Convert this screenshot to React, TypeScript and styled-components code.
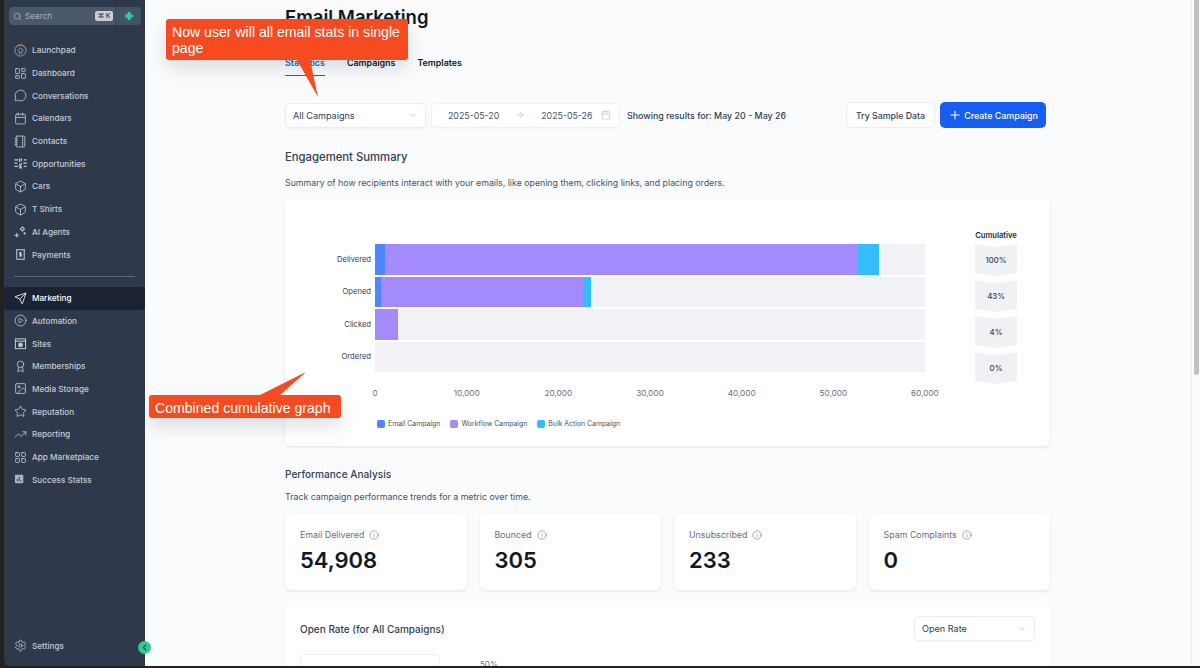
import React from "react";
import styled, { createGlobalStyle } from "styled-components";
import {
  Search, LayoutGrid, LayoutDashboard, MessageCircle, Calendar, Notebook, Box, Send, CirclePlay, Award, Image as ImageIcon,
  Star, TrendingUp, Settings, ChevronDown, ChevronLeft, ArrowRight, Plus, Info,
} from "lucide-react";

const Global = createGlobalStyle`
  html, body { margin: 0; padding: 0; height: 100%; overflow: hidden; background: #222; }
  * { box-sizing: border-box; }
  body { font-family: Inter, "Liberation Sans", sans-serif; }
`;

const Frame = styled.div`
  width: 1200px; height: 668px; background: #222; padding: 0 0 2px 4px; display: flex; position: relative; overflow: hidden;
`;
const Sidebar = styled.aside`
  width: 141px; flex: none; background: #2e3a4c; display: flex; flex-direction: column; border-bottom-left-radius: 6px; position: relative; padding-top: 7px;
`;
const SearchRow = styled.div`display: flex; margin: 0 4px 0 5px; height: 18px;`;
const SearchBox = styled.div`
  width: 106px; background: #4a586b; border-radius: 4px 0 0 4px; display: flex; align-items: center; padding: 0 2px 0 4px; color: #a9b2bf; font-size: 8.2px; gap: 3px;
`;
const SearchText = styled.span`flex: 1;`;
const Kbd = styled.span`
  background: #c9ced5; color: #3a4557; font-size: 6.5px; font-weight: 600; border-radius: 2px; height: 10px; line-height: 10px; width: 18px; flex: none; text-align: center; white-space: nowrap;
`;
const AiBtn = styled.div`flex: 1; background: #435265; border-radius: 0 4px 4px 0; display: flex; align-items: center; justify-content: center; border-left: 1px solid #39475a;`;
const NavList = styled.nav`display: flex; flex-direction: column; margin-top: 14px;`;
const NavRow = styled.div<{ $active?: boolean }>`
  height: 22.7px; display: flex; align-items: center; gap: 5px; padding-left: 10px;
  font-size: 8.2px; font-weight: 500; white-space: nowrap;
  color: ${p => (p.$active ? "#ffffff" : "#c5cad2")};
  background: ${p => (p.$active ? "#1b2333" : "transparent")};
  border-radius: ${p => (p.$active ? "3px" : "0")};
  svg { flex: none; width: 13px; height: 13px; }
`;
const Divider = styled.div`height: 1px; background: #5e6876; margin: 10px;`;
const Spacer = styled.div`flex: 1;`;
const SettingsWrap = styled.div`margin-bottom: 9px;`;
const Collapse = styled.div`
  position: absolute; right: -6px; bottom: 12px; width: 13px; height: 13px; border-radius: 50%; background: #2ecb8e; color: #175c46; display: flex; align-items: center; justify-content: center; z-index: 2;
`;

const Main = styled.main`flex: 1; background: #f9fbfd; padding: 5px 0 0 140px; overflow: hidden; min-width: 0;`;
const Title = styled.h1`margin: 0; font-size: 18.5px; line-height: 24px; font-weight: 600; color: #101828;`;
const Tabs = styled.div`display: flex; gap: 22px; margin-top: 21px; height: 26px;`;
const Tab = styled.div<{ $active?: boolean }>`
  padding-top: 6px; line-height: 13px; font-size: 8.9px; font-weight: 600; white-space: nowrap;
  color: ${p => (p.$active ? "#155eef" : "#101828")};
  border-bottom: ${p => (p.$active ? "1.5px solid #155eef" : "none")};
`;
const Content = styled.div`width: 765px;`;
const Toolbar = styled.div`display: flex; align-items: center; margin-top: 26px; height: 26px;`;
const Select = styled.div<{ $w: number }>`
  width: ${p => p.$w}px; height: 25px; flex: none; background: #fff; border: 1px solid #eaecf0; border-radius: 5px; padding: 0 7px; display: flex; align-items: center; justify-content: space-between; font-size: 9.1px; color: #344054; box-shadow: 0 1px 2px rgba(16,24,40,.04);
`;
const DateField = styled.div`
  width: 189px; height: 25px; flex: none; margin-left: 5px; background: #fff; border: 1px solid #f0f1f4; border-radius: 5px; display: flex; align-items: center; padding-left: 16px; font-size: 8.8px; color: #475467; white-space: nowrap; box-shadow: 0 1px 2px rgba(16,24,40,.03);
`;
const DateArrow = styled.span`display: flex; width: 42px; justify-content: center; color: #c4c9d2;`;
const DateIcon = styled.span`display: flex; margin-left: 9px; color: #c4c9d2;`;
const Showing = styled.div`margin-left: 7px; font-size: 8.9px; font-weight: 500; color: #344054; white-space: nowrap; flex: 1;`;
const Ghost = styled.div`
  width: 89px; height: 26px; flex: none; background: #fff; border: 1px solid #eaecf0; border-radius: 5px; display: flex; align-items: center; justify-content: center; font-size: 8.8px; font-weight: 500; color: #344054;
`;
const Primary = styled.div`
  width: 106px; height: 26px; flex: none; margin-left: 5px; margin-right: 4px; background: #155eef; border-radius: 5px; color: #fff; display: flex; align-items: center; justify-content: center; gap: 2px; font-size: 8.9px; font-weight: 500; white-space: nowrap;
`;
const Heading = styled.h2<{ $top: number; $size: number }>`
  margin: ${p => p.$top}px 0 0; font-size: ${p => p.$size}px; line-height: 16px; font-weight: 500; color: #344054;
`;
const Desc = styled.p<{ $top: number }>`
  margin: ${p => p.$top}px 0 0; font-size: 8.8px; line-height: 14px; color: #475467; white-space: nowrap;
`;
const ChartCard = styled.section`
  margin-top: 9px; height: 247px; background: #fff; border-radius: 6px; box-shadow: 0 1px 3px rgba(16,24,40,.1); padding: 29px 0 0 15px;
`;
const Plot = styled.div`
  display: grid; grid-template-columns: 71px 550px 42px; grid-template-rows: 16px 128px 32px auto;
`;
const CumTitle = styled.div`grid-column: 3; grid-row: 1; margin-left: 54px; width: 42px; text-align: center; font-size: 7.6px; font-weight: 600; color: #1d2939; white-space: nowrap; line-height: 16px;`;
const Labels = styled.div`grid-column: 1; grid-row: 2; display: flex; flex-direction: column; gap: 2px;`;
const RowLabel = styled.div`height: 30.5px; display: flex; align-items: center; justify-content: flex-end; font-size: 7.6px; color: #344054;`;
const Bars = styled.div`grid-column: 2; grid-row: 2; margin-left: 4px; width: 550px; display: flex; flex-direction: column; gap: 2px;`;
const Track = styled.div`height: 30.5px; background: #f1f2f5; display: flex;`;
const Seg = styled.div<{ $c: string }>`height: 100%; background: ${p => p.$c};`;
const CumCol = styled.div`grid-column: 3; grid-row: 2 / span 2; margin-left: 54px; width: 42px; display: flex; flex-direction: column; gap: 4px;`;
const Chevron = styled.div`
  height: 32px; background: #eff1f4; display: flex; align-items: center; justify-content: center; font-size: 7.8px; font-weight: 500; color: #344054;
  clip-path: polygon(0 0, 50% 9%, 100% 0, 100% 91%, 50% 100%, 0 91%);
`;
const Axis = styled.div`grid-column: 2; grid-row: 3; margin-left: 4px; width: 550px; display: flex; justify-content: space-between; padding-top: 15px;`;
const Tick = styled.div`width: 0; display: flex; justify-content: center; font-size: 8.2px; line-height: 12px; color: #667085; white-space: nowrap;`;
const Legend = styled.div`grid-column: 2; grid-row: 4; margin: 14px 0 0 6px; display: flex; gap: 10px;`;
const LegendItem = styled.div`display: flex; align-items: center; gap: 3px; font-size: 6.9px; line-height: 12px; color: #475467; white-space: nowrap;`;
const Swatch = styled.span<{ $c: string }>`width: 8px; height: 8px; border-radius: 2px; background: ${p => p.$c};`;
const Stats = styled.div`margin-top: 10px; display: grid; grid-template-columns: repeat(4, 1fr); gap: 13px; height: 76px;`;
const StatCard = styled.div`background: #fff; border-radius: 6px; box-shadow: 0 1px 3px rgba(16,24,40,.1); padding: 15px 15px 0;`;
const StatLabel = styled.div`display: flex; align-items: center; gap: 5px; font-size: 8.85px; line-height: 12px; color: #667085; white-space: nowrap;`;
const StatValue = styled.div`font-size: 22px; line-height: 30px; font-weight: 600; color: #101828; margin-top: 4px;`;
const RateCard = styled.section`margin-top: 11px; height: 100px; background: #fff; border-radius: 6px; box-shadow: 0 1px 2px rgba(16,24,40,.05); padding: 15px 15px 0;`;
const RateHead = styled.div`display: flex; align-items: center; justify-content: space-between;`;
const RateTitle = styled.div`font-size: 10px; font-weight: 500; color: #344054;`;
const RateBody = styled.div`display: flex; margin-top: 13px;`;
const RateBox = styled.div`width: 140px; height: 50px; border: 1px solid #f0f1f4; border-radius: 4px;`;
const RateTick = styled.div`margin: 5px 0 0 40px; font-size: 8px; line-height: 10px; color: #667085;`;

const Scrollbar = styled.div`width: 9px; flex: none; background: #fbfcfd; padding: 0 1px 0 2px; border-left: 1px solid #eceef0;`;
const Thumb = styled.div`height: 375px; background: #c1c2c2; border-radius: 0 0 2px 2px;`;

const Callout = styled.div<{ $x: number; $y: number; $w: number; $h: number }>`
  position: absolute; left: ${p => p.$x}px; top: ${p => p.$y}px; width: ${p => p.$w}px; height: ${p => p.$h}px;
  background: #f64b20; border-radius: 3px; color: #fff; padding: 5px 6px 0; font-family: "Liberation Sans", Arial, sans-serif; font-size: 14.1px; line-height: 16px; box-shadow: 0 8px 20px rgba(0,0,0,.13); z-index: 5;
`;
const Pointer = styled.svg<{ $x: number; $y: number }>`
  position: absolute; left: ${p => p.$x}px; top: ${p => p.$y}px; z-index: 5; overflow: visible;
`;

const S = { strokeWidth: 1.5 };

const LaunchIcon = () => (
  <svg viewBox="0 0 14 14" fill="none" stroke="#9aa3b0" strokeWidth="1">
    <circle cx="7" cy="7" r="6" />
    <path d="M2 3.5A6 6 0 0 1 11 2.5" stroke="#e07b3e" />
    <path d="M4 7l3-3 3 3M5.5 7v3h3V7" />
  </svg>
);
const OppIcon = () => (
  <svg viewBox="0 0 14 14" fill="none" stroke="#c5cad2" strokeWidth="1.3" strokeLinecap="round">
    <path d="M1 3h3M1 6.5h2M1 10h3M6 2v3M8 2v2M6 8l2 4M8 7l-2 5M11 3h2M10.5 6.5h3M11 10h2" />
  </svg>
);
const PayIcon = () => (
  <svg viewBox="0 0 14 14" fill="none" stroke="#c5cad2" strokeWidth="1.1">
    <path d="M2 2h10M3 2v10h8V2" />
    <path d="M8.5 5.2H6.2v1.7h1.8v1.8H5.6M7 4.4v5" />
  </svg>
);
const SitesIcon = () => (
  <svg viewBox="0 0 14 14" fill="none" stroke="#c5cad2" strokeWidth="1.1">
    <rect x="1.5" y="2" width="11" height="10.5" />
    <path d="M1.5 4.5h11" />
    <circle cx="7" cy="8.5" r="2" fill="#c5cad2" />
  </svg>
);
const AgentIcon = () => (
  <svg viewBox="0 0 14 14" fill="none" stroke="#c5cad2" strokeWidth="1.1" strokeLinecap="round">
    <path d="M9 2l2.2 2.2L9 6.4 6.8 4.2zM1 11h4M3 9v4M11.5 8v2M10.5 9h2" />
  </svg>
);
const StatsIcon = () => (
  <svg viewBox="0 0 14 14">
    <rect x="1" y="2" width="9" height="9" rx="1" fill="#aeb5c0" />
    <path d="M3 9V6.5h1V9zM5 9V4h1v5zM7 9V7.5h1V9z" fill="#2e3a4c" />
  </svg>
);
const Diamond = () => (
  <svg width="8" height="8" viewBox="0 0 10 10"><path d="M3.4 0h3.2l.6 2.8L10 3.4v3.2l-2.8.6-.6 2.8H3.4l-.6-2.8L0 6.6V3.4l2.8-.6z" fill="#2fd0a0" /></svg>
);

const top = [
  ["Launchpad", <LaunchIcon />], ["Dashboard", <LayoutDashboard {...S} />], ["Conversations", <MessageCircle {...S} />],
  ["Calendars", <Calendar {...S} />], ["Contacts", <Notebook {...S} />], ["Opportunities", <OppIcon />],
  ["Cars", <Box {...S} />], ["T Shirts", <Box {...S} />], ["AI Agents", <AgentIcon />], ["Payments", <PayIcon />],
] as const;
const bottom = [
  ["Automation", <CirclePlay {...S} />], ["Sites", <SitesIcon />], ["Memberships", <Award {...S} />],
  ["Media Storage", <ImageIcon {...S} />], ["Reputation", <Star {...S} />], ["Reporting", <TrendingUp {...S} />],
  ["App Marketplace", <LayoutGrid {...S} />], ["Success Statss", <StatsIcon />],
] as const;

const bars = [
  { l: "Delivered", s: [[10, "#4f86ff"], [473, "#a38bfb"], [21, "#35bdfb"]] },
  { l: "Opened", s: [[6, "#4f86ff"], [202, "#a38bfb"], [8, "#35bdfb"]] },
  { l: "Clicked", s: [[23, "#a38bfb"]] },
  { l: "Ordered", s: [] },
] as const;
const ticks = ["0", "10,000", "20,000", "30,000", "40,000", "50,000", "60,000"];
const stats = [["Email Delivered", "54,908"], ["Bounced", "305"], ["Unsubscribed", "233"], ["Spam Complaints", "0"]];

export default function App() {
  return (
    <Frame>
      <Global />
      <Sidebar>
        <SearchRow>
          <SearchBox>
            <Search size={9} />
            <SearchText>Search</SearchText>
            <Kbd>⌘ K</Kbd>
          </SearchBox>
          <AiBtn><Diamond /></AiBtn>
        </SearchRow>
        <NavList>
          {top.map(([t, i]) => <NavRow key={t}>{i}{t}</NavRow>)}
        </NavList>
        <Divider />
        <NavRow $active><Send {...S} />Marketing</NavRow>
        {bottom.map(([t, i]) => <NavRow key={t}>{i}{t}</NavRow>)}
        <Spacer />
        <SettingsWrap><NavRow><Settings {...S} />Settings</NavRow></SettingsWrap>
        <Collapse><ChevronLeft size={9} strokeWidth={3} /></Collapse>
      </Sidebar>
      <Main>
        <Content>
          <Title>Email Marketing</Title>
          <Tabs>
            <Tab $active>Statistics</Tab>
            <Tab>Campaigns</Tab>
            <Tab>Templates</Tab>
          </Tabs>
          <Toolbar>
            <Select $w={141}>All Campaigns<ChevronDown size={10} color="#c4c9d2" /></Select>
            <DateField>
              2025-05-20
              <DateArrow><ArrowRight size={10} /></DateArrow>
              2025-05-26
              <DateIcon><Calendar size={10} /></DateIcon>
            </DateField>
            <Showing>Showing results for: May 20 - May 26</Showing>
            <Ghost>Try Sample Data</Ghost>
            <Primary><Plus size={14} strokeWidth={1.8} />Create Campaign</Primary>
          </Toolbar>
          <Heading $top={21} $size={11.3}>Engagement Summary</Heading>
          <Desc $top={11}>Summary of how recipients interact with your emails, like opening them, clicking links, and placing orders.</Desc>
          <ChartCard>
            <Plot>
              <CumTitle>Cumulative</CumTitle>
              <Labels>{bars.map(b => <RowLabel key={b.l}>{b.l}</RowLabel>)}</Labels>
              <Bars>
                {bars.map(b => (
                  <Track key={b.l}>
                    {b.s.map(([w, c]) => <Seg key={c} $c={c} style={{ width: w }} />)}
                  </Track>
                ))}
              </Bars>
              <CumCol>
                {["100%", "43%", "4%", "0%"].map(v => <Chevron key={v}>{v}</Chevron>)}
              </CumCol>
              <Axis>{ticks.map(t => <Tick key={t}>{t}</Tick>)}</Axis>
              <Legend>
                <LegendItem><Swatch $c="#4f86ff" />Email Campaign</LegendItem>
                <LegendItem><Swatch $c="#a38bfb" />Workflow Campaign</LegendItem>
                <LegendItem><Swatch $c="#35bdfb" />Bulk Action Campaign</LegendItem>
              </Legend>
            </Plot>
          </ChartCard>
          <Heading $top={20} $size={10.1}>Performance Analysis</Heading>
          <Desc $top={8}>Track campaign performance trends for a metric over time.</Desc>
          <Stats>
            {stats.map(([l, v]) => (
              <StatCard key={l}>
                <StatLabel>{l}<Info size={10} strokeWidth={1.4} /></StatLabel>
                <StatValue>{v}</StatValue>
              </StatCard>
            ))}
          </Stats>
          <RateCard>
            <RateHead>
              <RateTitle>Open Rate (for All Campaigns)</RateTitle>
              <Select $w={121}>Open Rate<ChevronDown size={10} color="#c4c9d2" /></Select>
            </RateHead>
            <RateBody>
              <RateBox />
              <RateTick>50%</RateTick>
            </RateBody>
          </RateCard>
        </Content>
      </Main>
      <Scrollbar><Thumb /></Scrollbar>
      <Callout $x={166} $y={19} $w={242} $h={41}>Now user will all email stats in single page</Callout>
      <Pointer $x={297} $y={60} width="21" height="37"><polygon points="0,0 13,0 21,37" fill="#f64b20" /></Pointer>
      <Callout $x={149} $y={395} $w={192} $h={23}>Combined cumulative graph</Callout>
      <Pointer $x={260} $y={372} width="46" height="23"><polygon points="0,23 20,23 46,0" fill="#f64b20" /></Pointer>
    </Frame>
  );
}
